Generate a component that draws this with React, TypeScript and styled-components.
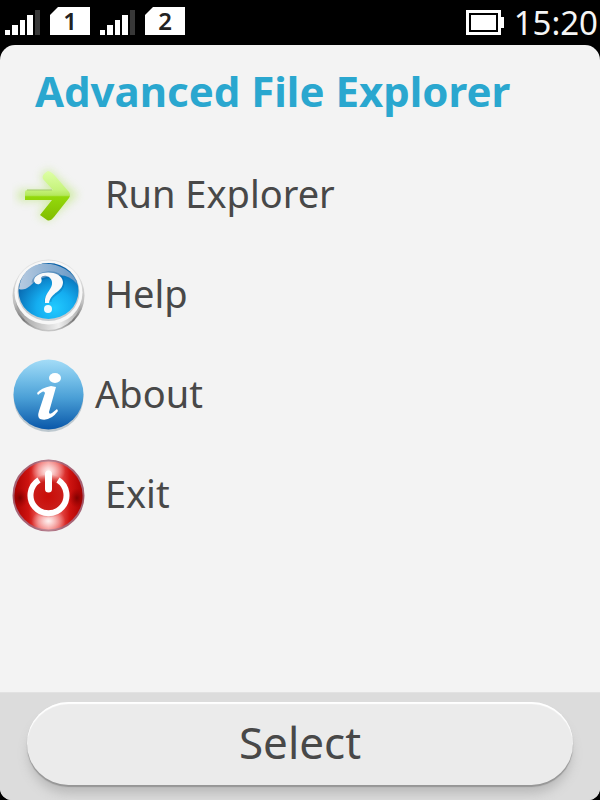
import React from "react";
import styled, { createGlobalStyle } from "styled-components";

const GlobalStyle = createGlobalStyle`
  *, *::before, *::after { box-sizing: border-box; }
  body { margin: 0; background: #000; font-family: "Noto Sans", sans-serif; }
`;

const Phone = styled.div`
  display: flex;
  flex-direction: column;
  min-height: 100vh;
  background: #000;
`;

const StatusBar = styled.header`
  display: flex;
  align-items: center;
  height: 45px;
  padding: 0 2px 0 5px;
  color: #f5f5f5;
`;

const Sim = styled.div`
  display: flex;
  align-items: flex-end;
  gap: 10px;
  height: 28px;
  margin-right: 10px;
  margin-bottom: 3px;
`;

const SimBadge = styled.span`
  width: 40px;
  height: 28px;
  background: #fff;
  color: #222;
  clip-path: polygon(8px 0, 100% 0, 100% 100%, 0 100%, 0 8px);
  font-size: 24px;
  font-weight: 600;
  line-height: 28px;
  text-align: center;
`;

const StatusEnd = styled.div`
  display: flex;
  align-items: center;
  gap: 10px;
  margin-left: auto;
`;

const Clock = styled.time`
  font-size: 33px;
  line-height: 45px;
`;

const Screen = styled.div`
  display: flex;
  flex: 1;
  flex-direction: column;
  overflow: hidden;
  border-radius: 15px 15px 12px 12px;
  background: #f3f3f3;
`;

const Title = styled.h1`
  margin: 0;
  padding: 0 35px 8px;
  color: #2aa7cf;
  font-size: 42px;
  font-weight: 700;
  line-height: 92px;
  white-space: nowrap;
`;

const Menu = styled.ul`
  flex: 1;
  margin: 0;
  padding: 0;
  list-style: none;
`;

const MenuItem = styled.button`
  display: flex;
  align-items: center;
  gap: 10px;
  width: 100%;
  height: 100px;
  padding: 0 12px;
  border: 0;
  background: none;
  color: #484848;
  font: inherit;
  font-size: 38px;
  text-align: left;
  white-space: pre;
  cursor: pointer;
`;

const Label = styled.span`
  padding-bottom: 4px;
`;

const Footer = styled.footer`
  padding: 9px 27px 15px;
  border-top: 1px solid #e2e2e2;
  background: #dcdcdc;
`;

const SelectButton = styled.button`
  display: block;
  width: 100%;
  height: 83px;
  padding: 0 0 4px;
  border: 0;
  border-radius: 42px;
  background: #ebebeb;
  box-shadow: inset 0 2px 1px #fff, 0 2px 1px #969696, 0 10px 12px -2px #b8b8b8;
  color: #484848;
  font: inherit;
  font-size: 44px;
  cursor: pointer;
`;

function Signal() {
  return (
    <svg width="35" height="25" viewBox="0 0 35 25" aria-hidden="true">
      <path fill="#fff" d="M0 20h5v5H0zM7 15h6v10H7zM15 10h5v15h-5zM22 5h6v20h-6z" />
      <path fill="#383838" d="M30 0h5v25h-5z" />
    </svg>
  );
}

function Battery() {
  return (
    <svg width="38" height="25" viewBox="0 0 38 25" aria-hidden="true">
      <path fill="#fff" fillRule="evenodd" d="M0 0h35v7h3v11h-3v7H0zM3 3v19h29V3z" />
      <path fill="#fff" d="M5 5h25v15H5z" />
    </svg>
  );
}

function ArrowIcon() {
  return (
    <svg width="73" height="73" viewBox="0 0 73 73" aria-hidden="true">
      <defs>
        <linearGradient id="arrow" x1="0" y1="0" x2="0" y2="1">
          <stop offset="0" stopColor="#deffa6" />
          <stop offset=".38" stopColor="#c6f37c" />
          <stop offset=".49" stopColor="#b4e85c" />
          <stop offset=".52" stopColor="#93d90b" />
          <stop offset="1" stopColor="#82bc00" />
        </linearGradient>
        <filter id="arrowGlow" x="-40%" y="-40%" width="180%" height="180%">
          <feGaussianBlur stdDeviation="4" />
        </filter>
      </defs>
      <path d="M6 31H38L28 18 36 10 66 36 36 62 26 56 36 42H6Z" fill="#bde77b" opacity=".6" filter="url(#arrowGlow)" />
      <path d="M15 31H41L31 20Q29 16 36 12Q40 13 44 18L57 33Q59 36 57 39L42 58Q38 63 35 61L28 56 40 41H13V33Q13 31 15 31Z" fill="url(#arrow)" />
      <path d="M15 31H40" fill="none" stroke="#a3c96a" />
    </svg>
  );
}

function HelpIcon() {
  return (
    <svg width="73" height="73" viewBox="0 0 73 73" aria-hidden="true">
      <defs>
        <linearGradient id="helpRim" x1="0" y1="0" x2="0" y2="1">
          <stop offset="0" stopColor="#dedede" />
          <stop offset=".15" stopColor="#e6e6e6" />
          <stop offset=".6" stopColor="#c0c0c0" />
          <stop offset=".84" stopColor="#777" />
          <stop offset="1" stopColor="#ccc" />
        </linearGradient>
        <radialGradient id="helpBlue" cx=".6" cy=".8" r=".72">
          <stop offset="0" stopColor="#21caff" />
          <stop offset=".42" stopColor="#14adf0" />
          <stop offset="1" stopColor="#0761a9" />
        </radialGradient>
        <linearGradient id="helpShine" x1="0" y1="0" x2="1" y2="0">
          <stop offset="0" stopColor="#b7cbe1" />
          <stop offset="1" stopColor="#6798c5" />
        </linearGradient>
        <linearGradient id="helpLip" x1="0" y1="0" x2="1" y2="0">
          <stop offset="0" stopColor="#999" />
          <stop offset=".65" stopColor="#efefef" />
          <stop offset="1" stopColor="#aaa" />
        </linearGradient>
      </defs>
      <circle cx="36.5" cy="36.5" r="36" fill="url(#helpRim)" />
      <ellipse cx="36.5" cy="38" rx="33" ry="33" fill="url(#helpLip)" />
      <ellipse cx="36.5" cy="33.5" rx="34" ry="32" fill="#f7f7f7" />
      <ellipse cx="36.5" cy="33" rx="31" ry="29" fill="#c7ccd0" />
      <ellipse cx="36.5" cy="32" rx="30" ry="28" fill="url(#helpBlue)" />
      <path d="M7 30Q9 12 24 6Q39 2 53 10Q63 16 65 25Q56 14 42 17Q25 18 18 27Q12 32 7 30Z" fill="url(#helpShine)" />
      <path d="M23 24C24 15 49 11 49 24C49 34 35 33 36 43" fill="none" stroke="#075c9d" strokeWidth="7" opacity=".35" />
      <path d="M22 22C22 11 50 10 51 23C51 33 39 33 37 44H33C32 33 41 31 40 23C39 16 30 15 29 19C32 25 24 28 22 22Z" fill="#f8f9fa" />
      <circle cx="36" cy="50" r="4" fill="#eefaff" />
    </svg>
  );
}

function InfoIcon() {
  return (
    <svg width="73" height="73" viewBox="0 0 73 73" aria-hidden="true">
      <defs>
        <linearGradient id="infoBlue" x1="0" y1="0" x2="0" y2="1">
          <stop offset="0" stopColor="#a4dcf7" />
          <stop offset=".25" stopColor="#79c2ea" />
          <stop offset=".55" stopColor="#4a9fd6" />
          <stop offset="1" stopColor="#0957a9" />
        </linearGradient>
      </defs>
      <ellipse cx="36.5" cy="38" rx="35" ry="35" fill="#9aabb8" opacity=".6" />
      <circle cx="36.5" cy="35.5" r="35" fill="url(#infoBlue)" />
      <ellipse cx="43" cy="19" rx="6" ry="5" fill="#fff" />
      <path d="M25 34Q29 29 39 27L44 28 37 53Q37 56 40 54L45 50 46 52Q38 63 28 60Q25 58 27 52L33 34Q32 30 26 36Z" fill="#fff" />
    </svg>
  );
}

function PowerIcon() {
  return (
    <svg width="73" height="73" viewBox="0 0 73 73" aria-hidden="true">
      <defs>
        <linearGradient id="powerRed" x1="0" y1="0" x2="1" y2="0">
          <stop offset="0" stopColor="#a80000" />
          <stop offset=".22" stopColor="#cf1411" />
          <stop offset=".36" stopColor="#ee5f5d" />
          <stop offset=".5" stopColor="#f5827f" />
          <stop offset=".65" stopColor="#ea5653" />
          <stop offset=".8" stopColor="#cf1411" />
          <stop offset="1" stopColor="#a80000" />
        </linearGradient>
        <radialGradient id="powerShine">
          <stop offset="0" stopColor="#fff" stopOpacity=".9" />
          <stop offset="1" stopColor="#fff" stopOpacity="0" />
        </radialGradient>
        <radialGradient id="powerCore">
          <stop offset="0" stopColor="#c90d08" />
          <stop offset=".65" stopColor="#ca1d19" />
          <stop offset="1" stopColor="#ca1d19" stopOpacity="0" />
        </radialGradient>
        <radialGradient id="powerDark">
          <stop offset="0" stopColor="#700" stopOpacity=".9" />
          <stop offset="1" stopColor="#900" stopOpacity="0" />
        </radialGradient>
      </defs>
      <circle cx="36.5" cy="36.5" r="35" fill="url(#powerRed)" stroke="#a66375" strokeWidth="2" />
      <ellipse cx="8" cy="39" rx="8" ry="10" fill="url(#powerDark)" />
      <ellipse cx="65" cy="39" rx="8" ry="10" fill="url(#powerDark)" />
      <ellipse cx="36.5" cy="12" rx="17" ry="13" fill="url(#powerShine)" />
      <ellipse cx="36.5" cy="62" rx="17" ry="12" fill="url(#powerShine)" />
      <circle cx="36" cy="37" r="22" fill="url(#powerCore)" />
      <path d="M27 21A18 18 0 1 0 46 21" fill="none" stroke="#fff" strokeWidth="6" />
      <path d="M36.500 15V30" stroke="#fff" strokeWidth="7" strokeLinecap="round" />
    </svg>
  );
}

const items = [
  { label: " Run Explorer", Icon: ArrowIcon },
  { label: " Help", Icon: HelpIcon },
  { label: "About", Icon: InfoIcon },
  { label: " Exit", Icon: PowerIcon },
];

export default function App() {
  return (
    <>
      <GlobalStyle />
      <Phone>
        <StatusBar>
          {[1, 2].map((slot) => (
            <Sim key={slot}>
              <Signal />
              <SimBadge>{slot}</SimBadge>
            </Sim>
          ))}
          <StatusEnd>
            <Battery />
            <Clock>15:20</Clock>
          </StatusEnd>
        </StatusBar>
        <Screen>
          <Title>Advanced File Explorer</Title>
          <Menu>
            {items.map(({ label, Icon }) => (
              <li key={label}>
                <MenuItem type="button">
                  <Icon />
                  <Label>{label}</Label>
                </MenuItem>
              </li>
            ))}
          </Menu>
          <Footer>
            <SelectButton type="button">Select</SelectButton>
          </Footer>
        </Screen>
      </Phone>
    </>
  );
}
